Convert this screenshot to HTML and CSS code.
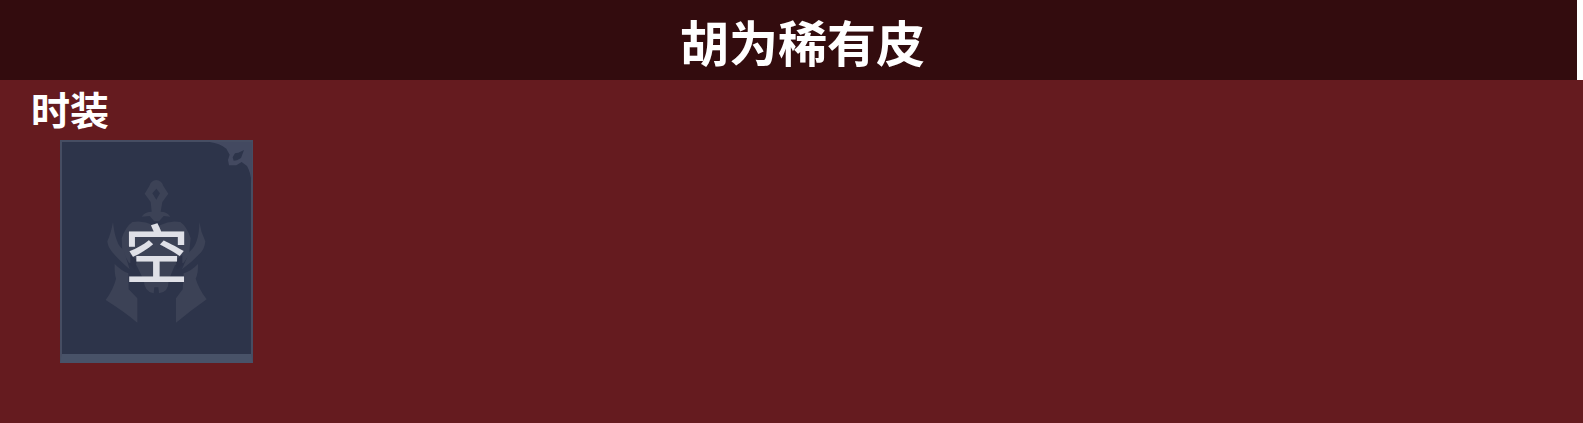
FILE: index.html
```
<!DOCTYPE html>
<html lang="zh-CN">

<head>
    <meta charset="utf-8">
    <title>胡为稀有皮</title>
    <link rel="stylesheet" href="styles.css">
</head>

<body>

    <header class="top">
        <h1>胡为稀有皮</h1>
    </header>

    <main class="content">
        <h2>时装</h2>
        <div class="cards">
            <div class="card">
                <svg class="card-art" viewBox="31 30 579 669" aria-hidden="true">
                    <!-- corner ornament -->
                    <path fill="#434960" d="M480 36 H606 V160 Q603 126 592 108 L576 96 L560 106 L538 106 L535 90 L540 74 L530 56 Q510 40 480 36Z" />
                    <path fill="#2d344a" d="M583 60 L574 84 L562 91 L552 92 L549 82 L556 70 L566 68Z" />
                    <g fill="#3c4256">
                        <!-- sword -->
                        <path fill-rule="evenodd" d="M320 150 Q336 152 341 168 L356 191 L338 216 L333 245 Q352 245 362 260 L342 258 L328 274 L314 274 L300 258 L276 260 Q286 245 306 245 L303 216 L285 191 L299 168 Q304 152 320 150Z M320 176 L308 190 L320 209 L331 190Z" />
                        <!-- helmet -->
                        <path d="M248 276 Q280 270 310 285 L320 300 L332 285 Q362 270 392 276 Q412 290 423 325 L418 375 L402 398 L376 405 L357 450 Q358 486 328 490 L326 472 L314 472 L312 490 Q284 486 282 450 L260 405 L238 398 L218 365 L216 325 Q228 290 248 276Z" />
                        <!-- horns -->
                        <path d="M190 276 Q193 310 202 332 Q208 350 222 360 L240 418 Q208 390 188 367 Q174 350 173 334 Q184 310 190 276Z" />
                        <path d="M449 276 Q453 305 467 334 Q465 360 447 374 Q425 397 397 418 L419 366 Q436 350 441 332 Q449 310 449 276Z" />
                        <!-- cheek guards -->
                        <path d="M195 402 Q217 424 236 430 L237 478 L263 505 V578 Q225 546 168 510 Q192 476 199 446 Q194 430 195 402Z" />
                        <path d="M445 402 Q446 430 438 446 Q448 478 471 508 Q420 544 379 578 V505 L399 478 L402 430 Q426 422 445 402Z" />
                    </g>
                    <path fill="#2c3248" d="M242 375 L262 390 L256 418 L242 405Z M378 390 L398 375 V405 L382 418Z" />
                </svg>
                <span class="card-label">空</span>
            </div>
        </div>
    </main>

</body>

</html>
```
FILE: styles.css
```
body {
    margin: 0;
    background-color: #651b1f;
    color: white;
    font-family: "Noto Sans CJK SC", sans-serif;
}

h1,
h2 {
    margin: 0;
    font-weight: bold;
}

.top {
    padding: 5px 0 3px 28px;
    background-color: #330c0e;
    border-right: 6px solid white;
    text-align: center;
}

h1 {
    font-size: 49px;
    line-height: 72px;
}

.content {
    padding: 0 31px;
}

h2 {
    padding-bottom: 4px;
    font-size: 39px;
    line-height: 56px;
}

.cards {
    display: flex;
    flex-wrap: wrap;
    gap: 24px;
    padding: 0 29px;
}

.card {
    position: relative;
    box-sizing: border-box;
    width: 193px;
    height: 223px;
    border: 2px solid #464d62;
    border-bottom: 9px solid #485268;
    background-color: #2d344a;
    display: flex;
    align-items: center;
    justify-content: center;
}

.card-art {
    position: absolute;
    top: -2px;
    left: -2px;
    width: 193px;
    height: 223px;
}

.card-label {
    position: relative;
    padding-top: 4px;
    color: #dfe0e7;
    font-size: 64px;
    font-weight: 500;
    line-height: 64px;
}
```
